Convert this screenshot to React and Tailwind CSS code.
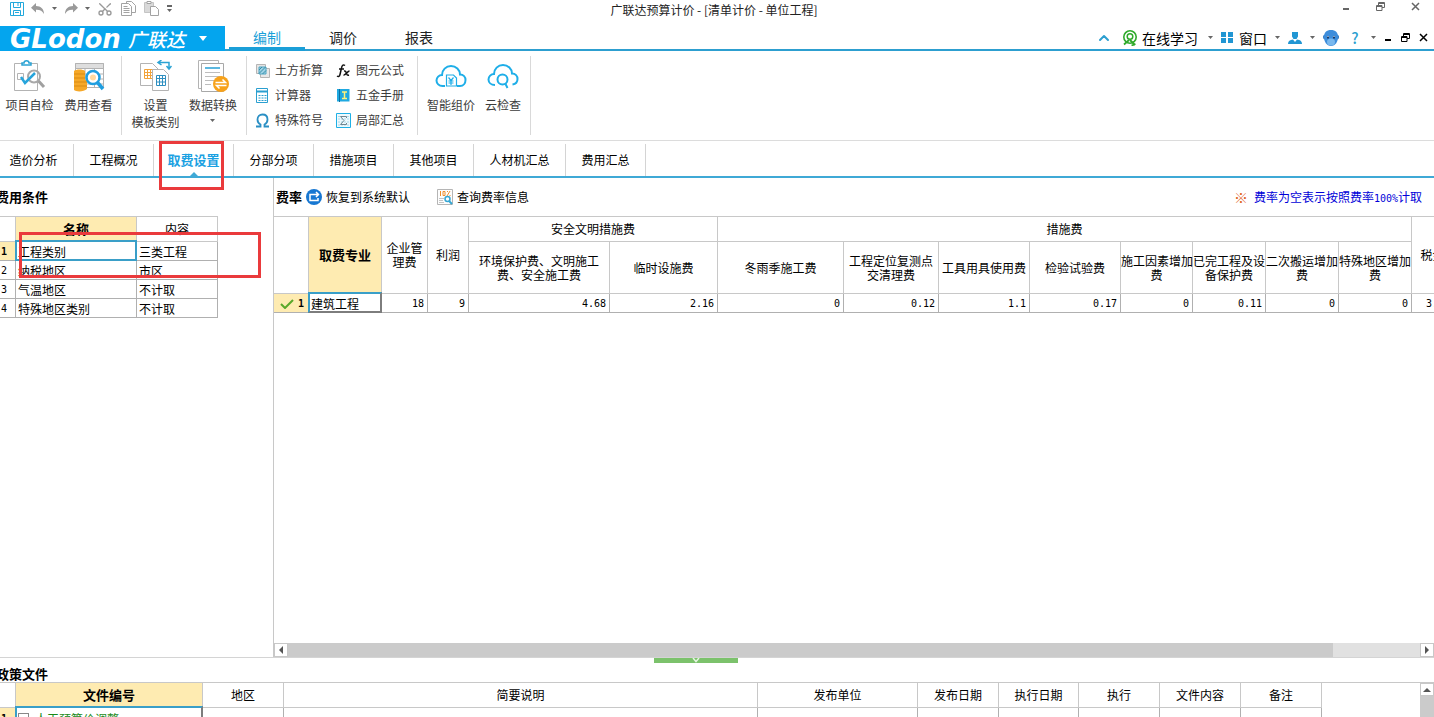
import { clsx } from 'clsx'
import { ChevronUp, Scissors } from 'lucide-react'

const ribbonSmall = [
  [
    { label: '土方折算', icon: EarthIcon },
    { label: '计算器', icon: CalculatorIcon },
    { label: '特殊符号', icon: OmegaIcon },
  ],
  [
    { label: '图元公式', icon: FxIcon },
    { label: '五金手册', icon: ManualIcon },
    { label: '局部汇总', icon: SumIcon },
  ],
]

const tabs = ['造价分析', '工程概况', '取费设置', '分部分项', '措施项目', '其他项目', '人材机汇总', '费用汇总']

const conditions = [
  ['工程类别', '三类工程'],
  ['纳税地区', '市区'],
  ['气温地区', '不计取'],
  ['特殊地区类别', '不计取'],
]

const feeColumns = [
  { name: '环境保护费、文明施工\n费、安全施工费', value: '4.68' },
  { name: '临时设施费', value: '2.16' },
  { name: '冬雨季施工费', value: '0' },
  { name: '工程定位复测点\n交清理费', value: '0.12' },
  { name: '工具用具使用费', value: '1.1' },
  { name: '检验试验费', value: '0.17' },
  { name: '施工因素增加\n费', value: '0' },
  { name: '已完工程及设\n备保护费', value: '0.11' },
  { name: '二次搬运增加\n费', value: '0' },
  { name: '特殊地区增加\n费', value: '0' },
]

const fileColumns = ['地区', '简要说明', '发布单位', '发布日期', '执行日期', '执行', '文件内容', '备注']

const th = 'border-r border-b border-[#c8c8c8] p-0 text-center font-normal whitespace-pre'
const td = 'border-r border-b border-[#b0b0b0] p-0 pt-0.5 whitespace-nowrap'
const num = "pr-[3px] text-right font-['DejaVu_Sans_Mono',monospace] text-[10px]"

function Caret({ className = 'text-[#666]' }) {
  return (
    <svg viewBox="0 0 5 3" className={clsx('h-[3px] w-[5px] shrink-0', className)} fill="currentColor">
      <path d="M0 0h5L2.5 3z" />
    </svg>
  )
}

function SaveIcon() {
  return (
    <svg viewBox="0 0 14 14" className="size-3.5" fill="none" stroke="#23a9dc">
      <path d="M.5.5h13v13H.5zM3.500.5v5h7v-5M3.500 13.500v-5h7v5M8 1v3M5 10.500h4" />
    </svg>
  )
}

function UndoIcon({ flip }) {
  return (
    <svg viewBox="0 0 14 12" className={clsx('h-3 w-3.5', flip && '-scale-x-100')} fill="#9a9a9a">
      <path d="M5 0v3c5 0 8 3 8 8-1.500-3-4-4.500-8-4.300V9.500L0 4.700z" />
    </svg>
  )
}

function CopyIcon() {
  return (
    <svg viewBox="0 0 15 15" className="size-[15px]" fill="#fff" stroke="#a3a3a3">
      <path d="M5.500.5h5l4 4v7h-9z" />
      <path d="M.5 2.500h7l3 3v9H.5zM2.500 5.500h4M2.500 7.500h6M2.500 9.500h6M2.500 11.500h6" />
    </svg>
  )
}

function PasteIcon() {
  return (
    <svg viewBox="0 0 15 15" className="size-[15px]" fill="none" stroke="#a3a3a3">
      <path d="M.5 1.500h9v10H.5z" fill="#d9d9d9" stroke="#c4c4c4" />
      <path d="M3 .5h4v2H3z" fill="#fff" />
      <path d="M6.500 5.500h5l3 3v6h-8z" fill="#fff" />
    </svg>
  )
}

function MinimizeIcon() {
  return (
    <svg viewBox="0 0 8 9" className="h-[9px] w-2" fill="none" stroke="currentColor" strokeWidth="2">
      <path d="M1 7h6" />
    </svg>
  )
}

function RestoreIcon() {
  return (
    <svg viewBox="0 0 9 9" className="size-[9px]" fill="none" stroke="currentColor">
      <path d="M2.500 3V.5h6v5H6M.5 3.500h5.500v5H.5zM.5 4.500h5.500M2.500 1.500h6" />
    </svg>
  )
}

function CloseIcon() {
  return (
    <svg viewBox="0 0 9 9" className="size-[9px]" fill="none" stroke="currentColor" strokeWidth="1.5">
      <path d="M1 1l7 7M8 1L1 8" />
    </svg>
  )
}

function LearnIcon() {
  return (
    <svg viewBox="0 0 16 16" className="size-4" fill="none" stroke="#2faa2b" strokeWidth="2">
      <circle cx="8" cy="7" r="6.200" strokeWidth="1.600" />
      <circle cx="8" cy="6.500" r="2.800" strokeWidth="1.500" />
      <path d="M2 14.500l5-4.500M8 10l5 5M9.500 15.500l4-1.500" strokeWidth="1.800" />
    </svg>
  )
}

function WindowsIcon() {
  return (
    <svg viewBox="0 0 12 11" className="h-[11px] w-3" fill="#2196d3">
      <path d="M0 0h5v5H0zM7 0h5v5H7zM0 6h5v5H0zM7 6h5v5H7z" />
    </svg>
  )
}

function UserIcon() {
  return (
    <svg viewBox="0 0 14 14" className="size-3.5" fill="#2196d3">
      <path d="M4 1h6v4.500L8.500 8h-3L4 5.500zM0 13c0-3 2-4 5-4.500L7 11l2-2.500c3 .5 5 1.500 5 4.500z" />
    </svg>
  )
}

function FaceIcon() {
  return (
    <svg viewBox="0 0 16 16" className="size-4">
      <circle cx="2.500" cy="7" r="2.500" fill="#2c78c4" />
      <circle cx="13.500" cy="7" r="2.500" fill="#2c78c4" />
      <path d="M8 0c4.500 0 7 2.500 7 7s-2.500 9-7 9-7-4.500-7-9 2.500-7 7-7z" fill="#3d8ddb" />
      <ellipse cx="8" cy="12" rx="4" ry="3.500" fill="#79b8ee" />
      <path d="M4 6h2v2.500H4zM10 6h2v2.500h-2z" fill="#173b6b" />
      <path d="M4.500 6h1v1h-1zM10.500 6h1v1h-1z" fill="#fff" />
    </svg>
  )
}

function SelfCheckIcon() {
  return (
    <svg viewBox="0 0 32 32" className="size-8" fill="none">
      <path d="M.5 3.500h23v27H.5z" stroke="#b3b3b3" fill="#fff" />
      <path d="M8 5V3h2c0-3 5-3 5 0h2v2z" fill="#fff" stroke="#2ba3d4" strokeWidth="1.500" />
      <path d="M3.500 13.500h6v6h-6z" stroke="#b3b3b3" />
      <circle cx="20" cy="16.500" r="6" stroke="#a9a9a9" strokeWidth="2" />
      <path d="M24.500 21l5.500 6" stroke="#a0a0a0" strokeWidth="3" />
      <path d="M7 17l4 6 10-10" stroke="#27a5dc" strokeWidth="2.500" />
    </svg>
  )
}

function FeeViewIcon() {
  return (
    <svg viewBox="0 0 32 32" className="size-8" fill="none">
      <path d="M2.500 3.500h28v24h-28zM2.500 14h28M2.500 19h28M2.500 24h28M12 8v19M21.500 8v19" stroke="#b3b3b3" />
      <path d="M2.500 3.500h28v5h-28z" fill="#dedede" stroke="#b3b3b3" />
      <path d="M1 11c2-2 9-2 11 0v9h2v9c-3 3-11 3-13 1z" fill="#f6a828" />
      <path d="M1 14h11M1 18h11M1 22h13M1 26h13" stroke="#d98a12" />
      <circle cx="20" cy="17.500" r="6.500" fill="#fff" stroke="#1e9ee0" strokeWidth="2.500" />
      <circle cx="20" cy="17.500" r="3" fill="#ffd9a0" />
      <path d="M24.500 22.500l5.500 6.500" stroke="#1e9ee0" strokeWidth="3.500" />
    </svg>
  )
}

function TemplateIcon() {
  return (
    <svg viewBox="0 0 32 32" className="size-8" fill="none">
      <path d="M.5 3.500h12l6 6v16H.5z" fill="#fff" stroke="#b3b3b3" />
      <path d="M4.500 9.500h9v9h-9zM4.500 12.500h9M4.500 15.500h9M7.500 9.500v9M10.500 9.500v9" stroke="#f2a33a" />
      <path d="M12.500 9.500h11l5 5v16h-16z" fill="#fff" stroke="#b3b3b3" />
      <path d="M16.500 15.500h9v10h-9zM16.500 18.500h9M16.500 22h9M19.500 15.500v10M22.500 15.500v10" stroke="#2f8fc0" />
      <path d="M19 2.500h10V8M21.500 0L18 2.500 21.500 5M26.500 6l2.500 3 2.500-3" stroke="#2ba3d4" strokeWidth="1.500" />
    </svg>
  )
}

function ConvertIcon() {
  return (
    <svg viewBox="0 0 32 32" className="size-8" fill="none">
      <path d="M1.500.5h20v28h-20z" fill="#fff" stroke="#b3b3b3" />
      <path d="M4.500 3.500h22v28h-22z" fill="#fff" stroke="#a8a8a8" />
      <path d="M8 8h15" stroke="#5cb8e0" strokeWidth="2" />
      <path d="M8 12.500h15M8 16.500h15M8 20.500h9M8 24.500h6" stroke="#bdbdbd" />
      <circle cx="24" cy="24" r="8" fill="#f7a21b" />
      <path d="M18.500 22.500h10l-3-3M29.500 25.500h-10l3 3" stroke="#fff" strokeWidth="1.500" />
    </svg>
  )
}

function EarthIcon() {
  return (
    <svg viewBox="0 0 15 15" className="size-[15px]" fill="none">
      <path d="M1.500 1.500h9v9h-9z" fill="#e4e4e4" stroke="#b5b5b5" />
      <path d="M5.500 5.500h9v9h-9z" fill="#e8e8e8" stroke="#b5b5b5" />
      <path d="M4 4h7v7H4z" fill="#9fd3e6" stroke="#4ea6c4" />
      <path d="M4 7l3-3M4 10.500L10.500 4M7.500 11L11 7.500" stroke="#378da8" />
    </svg>
  )
}

function CalculatorIcon() {
  return (
    <svg viewBox="0 0 15 15" className="size-[15px]" fill="none" stroke="#2a9fd0">
      <path d="M1.500.5h11v14h-11z" />
      <path d="M2 3.500h10" strokeWidth="2" />
      <path d="M3.500 7.500h8M3.500 10h8M3.500 12.500h8" strokeDasharray="2 1" />
    </svg>
  )
}

function OmegaIcon() {
  return (
    <svg viewBox="0 0 15 15" className="size-[15px]" fill="none" stroke="#2a8fc4" strokeWidth="1.800">
      <path d="M1 13.500h4.500v-2C3.500 10.500 2.500 9 2.500 6.500 2.500 3.500 4.500 1.500 7.500 1.500s5 2 5 5c0 2.500-1 4-3 5v2H14" />
    </svg>
  )
}

function FxIcon() {
  return (
    <svg viewBox="0 0 15 15" className="size-[15px]" fill="none" stroke="#111" strokeWidth="1.500">
      <path d="M9 2.500C7 1 6 2.500 5.500 5L4 11.500c-.5 2-1.500 2.500-3 1.500M3 6h5M8 8c2-.5 2 1 2.500 2.500s1 2 2.500 1.500M13.500 8c-2 0-4 4.500-6 4" />
    </svg>
  )
}

function ManualIcon() {
  return (
    <svg viewBox="0 0 15 15" className="size-[15px]" fill="none">
      <path d="M1 1h12.500v12.500H1z" fill="#1fa9e1" />
      <path d="M3.500 1v13" stroke="#0b6fa0" />
      <path d="M6 4h5M6 10.500h5M8.500 4v6.500" stroke="#fff27a" strokeWidth="1.500" />
    </svg>
  )
}

function SumIcon() {
  return (
    <svg viewBox="0 0 15 15" className="size-[15px]" fill="none">
      <path d="M.5.5h14v14H.5z" fill="#eef9fd" stroke="#1fb0e6" />
      <path d="M2 3.500h11M2 6h11M2 9h11M2 12h11" stroke="#a9d9ea" strokeDasharray="2 1" />
      <path d="M10.500 5V3.500h-6L8 7.500l-3.500 4h6V10" stroke="#6f8590" />
    </svg>
  )
}

function CloudPriceIcon() {
  return (
    <svg viewBox="0 0 32 32" className="size-8" fill="none" stroke="#1eaee8" strokeWidth="2">
      <path d="M10 26H7.500C4 26 1.500 23.500 1.500 20.500S4 15 7 15c0-5 4-9 9-9s9 4 9 8.500c3.500 0 5.500 2.500 5.500 5.500s-2 6-5.500 6h-3" />
      <path d="M11.500 26v-11h7l3 3v8zM13.500 17.500l2.500 3 2.500-3M16 20.500V25M13.500 21h5M13.500 23h5" strokeWidth="1.200" />
    </svg>
  )
}

function CloudCheckIcon() {
  return (
    <svg viewBox="0 0 32 32" className="size-8" fill="none" stroke="#1eaee8" strokeWidth="2">
      <path d="M8 25C4 25 1.500 22.500 1.500 19.500S4 14 7 14c0-5 4-9 9-9s9 4 9 8.500c3.500 0 5.500 2.500 5.500 5.500s-2 5-5 5.500" />
      <circle cx="15.500" cy="19.500" r="5" />
      <path d="M18.500 24l2 4" />
    </svg>
  )
}

function RestoreDefaultIcon() {
  return (
    <svg viewBox="0 0 16 16" className="size-4" fill="none" stroke="#fff" strokeWidth="1.500">
      <circle cx="8" cy="8" r="8" fill="#1777d2" stroke="none" />
      <path d="M8 5.500H4v6h8V9M7 5.500h5M10 3l2.500 2.500L10 8" />
    </svg>
  )
}

function QueryIcon() {
  return (
    <svg viewBox="0 0 16 16" className="size-4" fill="none">
      <path d="M.5.5h15v15H.5z" fill="#fdfdfd" stroke="#b5b5b5" />
      <path d="M3.500 2v5M6 2.500h2v4H6zM13 2l-3 5M10 2.500h1M12.500 6.500h1" stroke="#ef8e2c" />
      <path d="M2 9.500h5M2 11.500h4M2 13.500h5" stroke="#c4c4c4" />
      <circle cx="10.500" cy="10" r="2.500" stroke="#35a6d3" strokeWidth="1.500" />
      <path d="M12 12l3 3" stroke="#35a6d3" strokeWidth="2" />
    </svg>
  )
}

function TitleBar() {
  return (
    <div className="grid h-[26px] shrink-0 grid-cols-[1fr_auto_1fr] items-start">
      <div className="flex h-[17px] items-center gap-[7px] pl-2.5">
        <button aria-label="保存"><SaveIcon /></button>
        <button aria-label="撤销"><UndoIcon /></button>
        <Caret />
        <button aria-label="恢复"><UndoIcon flip /></button>
        <Caret />
        <div className="flex items-center gap-2">
          <button aria-label="剪切"><Scissors className="size-4 -rotate-90 text-[#999]" strokeWidth={2} /></button>
          <button aria-label="复制"><CopyIcon /></button>
          <button aria-label="粘贴"><PasteIcon /></button>
          <button aria-label="更多" className="flex flex-col items-center gap-0.5 text-[#555]">
            <span className="h-0.5 w-[5px] bg-[#666]" />
            <Caret />
          </button>
        </div>
      </div>
      <h1 className="pr-1.5 text-xs leading-5 text-[#222]">广联达预算计价 - [清单计价 - 单位工程]</h1>
      <div className="flex h-3 items-center justify-end gap-[26px] pr-3.5 text-[#666]">
        <button aria-label="最小化"><MinimizeIcon /></button>
        <button aria-label="还原"><RestoreIcon /></button>
        <button aria-label="关闭"><CloseIcon /></button>
      </div>
    </div>
  )
}

function MenuBar() {
  return (
    <header className="flex h-[25px] shrink-0 justify-between border-b-2 border-[#2d9fd0]">
      <div className="flex">
        <button className="-mb-0.5 flex w-[225px] items-center bg-[#04a5ee] pl-2.5 text-white">
          <span className="w-[118px] text-left font-['DejaVu_Sans',sans-serif] text-[26px] leading-6 font-bold italic">GLodon</span>
          <span className="text-[19px] leading-6 font-medium italic">广联达</span>
          <svg viewBox="0 0 8 5" className="ml-3.5 h-[5px] w-2" fill="currentColor"><path d="M0 0h8L4 5z" /></svg>
        </button>
        <nav className="ml-1 flex text-sm leading-[22px] text-[#222]">
          <a href="#" className="-mb-0.5 w-[76px] border-b-4 border-[#1b9fd8] text-center text-[#1b9fd8]">编制</a>
          <a href="#" className="w-[76px] text-center">调价</a>
          <a href="#" className="w-[76px] text-center">报表</a>
        </nav>
      </div>
      <div className="flex items-center gap-2 pr-1.5 text-sm leading-5 text-black">
        <button aria-label="收起" className="mr-0.5 text-[#2d9fd0]"><ChevronUp className="size-4" strokeWidth={3} /></button>
        <button className="mr-0.5 flex items-center gap-1"><LearnIcon />在线学习</button>
        <Caret />
        <button className="flex items-center gap-1.5"><WindowsIcon />窗口</button>
        <Caret />
        <button aria-label="用户"><UserIcon /></button>
        <Caret />
        <button aria-label="助手"><FaceIcon /></button>
        <button aria-label="帮助" className="w-4 text-center text-[15px] font-medium text-[#2d9fd0]">?</button>
        <Caret />
        <div className="flex items-center gap-[9px]">
          <button aria-label="最小化"><MinimizeIcon /></button>
          <button aria-label="还原"><RestoreIcon /></button>
          <button aria-label="关闭"><CloseIcon /></button>
        </div>
      </div>
    </header>
  )
}

function BigButton({ icon: Icon, children, className = 'w-[59px]' }) {
  return (
    <button className={clsx('flex flex-col items-center pt-1 leading-[17px] whitespace-nowrap', className)}>
      <Icon />
      <span className="pt-1">{children}</span>
    </button>
  )
}

function Ribbon() {
  return (
    <div className="flex h-[90px] shrink-0 border-b border-[#dcdcdc] py-[5px] text-xs text-[#3c3c3c]">
      <div className="flex w-[122px] border-r border-[#d9d9d9]">
        <BigButton icon={SelfCheckIcon}>项目自检</BigButton>
        <BigButton icon={FeeViewIcon}>费用查看</BigButton>
      </div>
      <div className="flex w-[125px] border-r border-[#d9d9d9] pl-1">
        <BigButton icon={TemplateIcon}>设置<br />模板类别</BigButton>
        <BigButton icon={ConvertIcon} className="w-14">
          数据转换
          <span className="flex h-3.5 items-center justify-center"><Caret /></span>
        </BigButton>
      </div>
      <div className="flex w-[171px] gap-[13px] border-r border-[#d9d9d9] pl-2">
        {ribbonSmall.map((group, i) => (
          <div key={i} className="flex flex-col items-start gap-[5px] pt-1">
            {group.map(({ label, icon: Icon }) => (
              <button key={label} className="flex h-5 items-center gap-[5px]">
                <Icon />
                {label}
              </button>
            ))}
          </div>
        ))}
      </div>
      <div className="flex w-[113px] border-r border-[#d9d9d9] pl-1.5">
        <BigButton icon={CloudPriceIcon} className="w-[54px]">智能组价</BigButton>
        <BigButton icon={CloudCheckIcon} className="w-[50px]">云检查</BigButton>
      </div>
    </div>
  )
}

function Tabs() {
  return (
    <nav className="flex h-[37px] shrink-0 border-b-2 border-[#3fa9d6] pt-[3px] text-xs text-black">
      {tabs.map((tab, i) => {
        const active = tab === '取费设置'
        return (
          <a
            key={tab}
            href="#"
            className={clsx(
              'relative flex items-center justify-center border-r border-[#d4d4d4]',
              tab.length > 4 ? 'w-[92px]' : 'w-20',
              i === 0 && '-ml-1.5',
              active && 'text-[13px] font-bold text-[#1ba1e2]',
            )}
          >
            {tab}
            {active && (
              <>
                <svg viewBox="0 0 8 4" className="absolute bottom-0 left-9 h-1 w-2" fill="#3fa9d6"><path d="M0 4l4-4 4 4z" /></svg>
                <span className="absolute -top-[3px] left-[5px] z-10 h-[49px] w-[65px] border-3 border-[#ea3a3c]" />
              </>
            )}
          </a>
        )
      })}
    </nav>
  )
}

// frame drawn over the cell grid around the current cell
function CellFrame({ shaded }) {
  return (
    <span
      className={clsx(
        'pointer-events-none absolute -top-0.5 -right-px -bottom-px -left-px border-2 border-[#3a9fc8]',
        shaded && 'border-r-[#7d7d7d] border-b-[#7d7d7d]',
      )}
    />
  )
}

function ConditionsPanel() {
  return (
    <section className="w-[273px] shrink-0 overflow-hidden">
      <h2 className="-ml-1 h-[38px] text-[13px] leading-[38px] font-bold">费用条件</h2>
      <div className="relative">
        <table className="w-[218px] table-fixed border-separate border-spacing-0 border-t border-[#c8c8c8] leading-[14px]">
          <colgroup>
            <col className="w-4" />
            <col className="w-[121px]" />
            <col className="w-[81px]" />
          </colgroup>
          <thead>
            <tr className="h-[25px]">
              <th className={th} />
              <th className={clsx(th, 'bg-[#feebb1] text-[13px] font-bold!')}>名称</th>
              <th className={th}>内容</th>
            </tr>
          </thead>
          <tbody>
            {conditions.map(([name, value], i) => (
              <tr key={name} className="h-[19px]">
                <td className={clsx(td, "pl-px! font-['DejaVu_Sans_Mono',monospace] text-[10px]", i === 0 && 'bg-[#feebb1] font-bold')}>{i + 1}</td>
                <td className={clsx(td, 'relative pl-0.5!')}>
                  {name}
                  {i === 0 && <CellFrame />}
                </td>
                <td className={clsx(td, 'pl-0.5!')}>{value}</td>
              </tr>
            ))}
          </tbody>
        </table>
        <span className="absolute top-4 left-[19px] h-[46px] w-[242px] border-3 border-[#ea3a3c]" />
      </div>
    </section>
  )
}

function RatePanel() {
  return (
    <section className="flex min-w-0 flex-1 flex-col border-l border-[#c8c8c8]">
      <div className="flex h-[38px] shrink-0 items-center pr-3 pl-0.5">
        <h2 className="text-[13px] font-bold">费率</h2>
        <button className="ml-1 flex items-center gap-1"><RestoreDefaultIcon />恢复到系统默认</button>
        <button className="ml-[27px] flex items-center gap-1"><QueryIcon />查询费率信息</button>
        <p className="ml-auto flex items-center gap-1.5 text-[#0000d8]">
          <span className="text-sm text-[#e0601c]">※</span>
          <span>费率为空表示按照费率<span className="font-['DejaVu_Sans_Mono',monospace] text-[10px]">100%</span>计取</span>
        </p>
      </div>
      <div className="min-h-0 flex-1 overflow-hidden border-t border-[#c8c8c8]">
        <table className="w-[1180px] table-fixed border-separate border-spacing-0 leading-[14px]">
          <colgroup>
            <col className="w-[35px]" />
            <col className="w-[73px]" />
            <col className="w-[46px]" />
            <col className="w-[41px]" />
            <col className="w-[141px]" />
            <col className="w-[108px]" />
            <col className="w-[126px]" />
            <col className="w-[95px]" />
            <col className="w-[91px]" />
            <col className="w-[91px]" />
            <col className="w-[72px]" />
            <col className="w-[73px]" />
            <col className="w-[73px]" />
            <col className="w-[73px]" />
            <col className="w-[42px]" />
          </colgroup>
          <thead>
            <tr className="h-[25px]">
              <th rowSpan={2} className={th} />
              <th rowSpan={2} className={clsx(th, 'bg-[#feebb1] text-[13px] font-bold!')}>取费专业</th>
              <th rowSpan={2} className={th}>{'企业管\n理费'}</th>
              <th rowSpan={2} className={th}>利润</th>
              <th colSpan={2} className={th}>安全文明措施费</th>
              <th colSpan={8} className={th}>措施费</th>
              <th rowSpan={2} className={th}>税金</th>
            </tr>
            <tr className="h-[52px]">
              {feeColumns.map((c) => (
                <th key={c.name} className={th}>{c.name}</th>
              ))}
            </tr>
          </thead>
          <tbody>
            <tr className="h-[19px]">
              <td className={clsx(td, 'bg-[#feebb1]')}>
                <span className="flex items-center justify-end gap-1 pr-1">
                  <svg viewBox="0 0 14 10" className="h-2.5 w-3.5" fill="none" stroke="#5aa82a" strokeWidth="2"><path d="M1 5l4 4 8-8" /></svg>
                  <b className="font-['DejaVu_Sans_Mono',monospace] text-[10px]">1</b>
                </span>
              </td>
              <td className={clsx(td, 'relative pl-0.5!')}>
                建筑工程
                <CellFrame shaded />
              </td>
              <td className={clsx(td, num)}>18</td>
              <td className={clsx(td, num)}>9</td>
              {feeColumns.map((c) => (
                <td key={c.name} className={clsx(td, num)}>{c.value}</td>
              ))}
              <td className={clsx(td, num)}>3.48</td>
            </tr>
          </tbody>
        </table>
      </div>
      <div className="flex h-3.5 shrink-0 bg-[#e1e1e1] pr-[7px]">
        <button aria-label="向左滚动" className="flex w-3.5 items-center justify-center border border-[#c8c8c8] bg-white">
          <svg viewBox="0 0 4 8" className="h-2 w-1" fill="#555"><path d="M4 0v8L0 4z" /></svg>
        </button>
        <div className="flex-1 pr-[87px]"><div className="h-full bg-[#cbcbcb]" /></div>
        <button aria-label="向右滚动" className="-mr-[7px] flex w-3.5 items-center justify-center border border-[#c8c8c8] bg-white">
          <svg viewBox="0 0 4 8" className="h-2 w-1" fill="#555"><path d="M0 0v8l4-4z" /></svg>
        </button>
      </div>
    </section>
  )
}

function PolicyPanel() {
  return (
    <section className="relative h-[60px] shrink-0 overflow-hidden border-t border-[#d4d4d4]">
      <button aria-label="折叠" className="absolute top-0 left-1/2 -ml-[63px] flex h-[5px] w-[84px] items-center justify-center bg-[#7cc26c]">
        <svg viewBox="0 0 8 5" className="h-[5px] w-2" fill="none" stroke="#e6f5e2" strokeWidth="1.500"><path d="M1 0l3 3.500L7 0" /></svg>
      </button>
      <h2 className="-ml-1 h-6 pt-1 text-[13px] leading-6 font-bold">政策文件</h2>
      <div className="flex border-t border-[#c8c8c8]">
        <div className="min-w-0 flex-1">
          <table className="w-[1322px] table-fixed border-separate border-spacing-0 leading-[14px]">
            <colgroup>
              <col className="w-4" />
              <col className="w-[187px]" />
              <col className="w-[81px]" />
              <col className="w-[474px]" />
              <col className="w-[160px]" />
              <col className="w-[81px]" />
              <col className="w-[80px]" />
              <col className="w-[81px]" />
              <col className="w-[81px]" />
              <col className="w-[81px]" />
            </colgroup>
            <thead>
              <tr className="h-[25px]">
                <th className={th} />
                <th className={clsx(th, 'bg-[#feebb1] text-[13px] font-bold!')}>文件编号</th>
                {fileColumns.map((c) => (
                  <th key={c} className={th}>{c}</th>
                ))}
              </tr>
            </thead>
            <tbody>
              <tr className="h-5">
                <td className={clsx(td, "bg-[#feebb1] pl-px! font-['DejaVu_Sans_Mono',monospace] text-[10px] font-bold")}>1</td>
                <td className={clsx(td, 'relative pl-0.5! text-[#1a8a1a]')}>
                  <span className="flex items-center gap-1.5">
                    <span className="flex size-[11px] items-center justify-center border border-[#888]"><span className="h-px w-[5px] bg-black" /></span>
                    人工预算价调整
                  </span>
                  <CellFrame shaded />
                </td>
                {fileColumns.map((c) => (
                  <td key={c} className={td} />
                ))}
              </tr>
            </tbody>
          </table>
        </div>
        <div className="flex w-3.5 flex-col bg-[#cbcbcb]">
          <button aria-label="向上滚动" className="flex h-[13px] items-center justify-center border border-[#c8c8c8] bg-white">
            <svg viewBox="0 0 8 4" className="h-1 w-2" fill="#555"><path d="M0 4h8L4 0z" /></svg>
          </button>
        </div>
      </div>
    </section>
  )
}

export default function App() {
  return (
    <div className="flex h-screen flex-col overflow-hidden bg-white font-['Noto_Sans_CJK_SC',sans-serif] text-xs text-black">
      <TitleBar />
      <MenuBar />
      <Ribbon />
      <Tabs />
      <main className="flex min-h-0 flex-1">
        <ConditionsPanel />
        <RatePanel />
      </main>
      <PolicyPanel />
    </div>
  )
}
